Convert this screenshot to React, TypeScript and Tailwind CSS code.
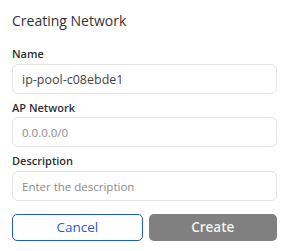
import React from "react";

export default function App() {
  const label = "text-[11px] leading-4 font-semibold text-[#2f2f2f]";
  const input =
    "h-[30px] w-full rounded-md border border-[#e3e3e3] px-[9px] text-[12.5px] text-[#444444] placeholder:text-[11.5px] placeholder:text-[#8a8a8a] outline-none";
  return (
    <div
      className="w-[289px] h-[251px] bg-white px-3 pt-[11px]"
      style={{ fontFamily: '"Open Sans", sans-serif' }}
    >
      <div className="text-[14px] leading-5 text-[#333333]">Creating Network</div>
      <div className="mt-[15px] flex flex-col gap-[6px]">
        <div className="flex flex-col">
          <label className={`${label} mb-[2px]`}>Name</label>
          <input className={input} defaultValue="ip-pool-c08ebde1" />
        </div>
        <div className="flex flex-col">
          <label className={`${label} mb-[1px]`}>AP Network</label>
          <input className={input} placeholder="0.0.0.0/0" />
        </div>
        <div className="flex flex-col">
          <label className={`${label} mb-[2px]`}>Description</label>
          <input className={input} placeholder="Enter the description" />
        </div>
      </div>
      <div className="mt-[13px] flex gap-[6px]">
        <button className="h-[27px] flex-1 rounded-[5px] border border-[#1f5bd6] bg-white text-[13.5px] text-[#1f5bd6]">
          Cancel
        </button>
        <button className="h-[27px] flex-1 rounded-[5px] bg-[#808080] text-[13.5px] font-semibold text-[#f2f2f2]">
          Create
        </button>
      </div>
    </div>
  );
}
